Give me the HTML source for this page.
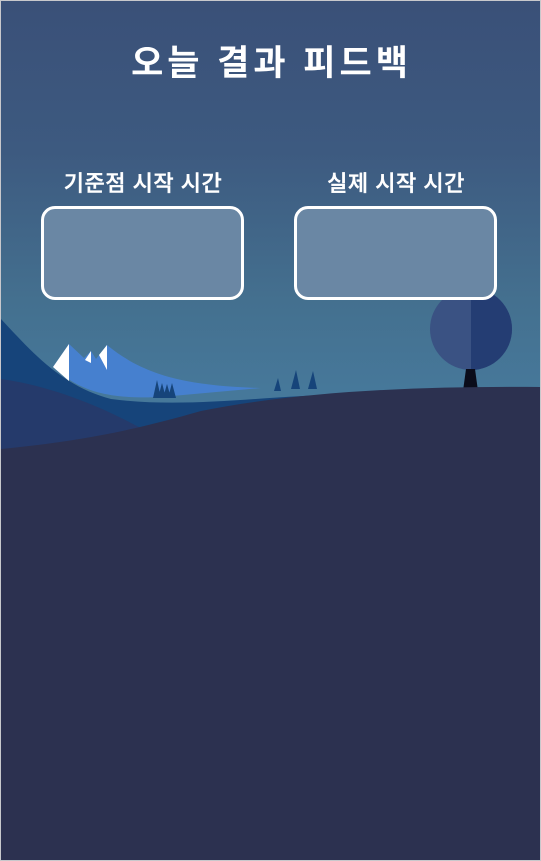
<!DOCTYPE html>
<html><head><meta charset="utf-8"><style>
html,body{margin:0;padding:0}
body{width:541px;height:861px;position:relative;overflow:hidden;font-family:"Liberation Sans","Noto Sans CJK KR",sans-serif;background:#2c3250}
.frame{position:absolute;left:0;top:0;width:539px;height:859px;border:1px solid #c8c8cc;overflow:hidden;background:linear-gradient(#3a5078 0px,#3d5a80 150px,#44708f 300px,#46789a 390px)}
h1{position:absolute;top:34px;left:0;width:541px;text-align:center;margin:0;color:#fff;font-size:35px;font-weight:bold;letter-spacing:4px}
.lbl{position:absolute;top:165px;color:#fff;font-size:22px;font-weight:500;text-align:center;width:240px;letter-spacing:0.5px;-webkit-text-stroke:0.4px #fff}
.box{position:absolute;top:205px;width:197px;height:88px;border:3px solid #fff;border-radius:14px;background:#6a87a4}
svg{position:absolute;left:0;top:0}
</style></head><body><div class="frame">
<svg width="541" height="861" viewBox="0 0 541 861">
<circle cx="470" cy="328" r="41" fill="#3a5283"/>
<path d="M470 287 A41 41 0 0 1 470 369 Z" fill="#243d73"/>
<path d="M465 368 L474 368 L477 390 L462 390 Z" fill="#0a0c1a"/>
<path d="M0 318 C30 350 60 385 110 398 C200 410 300 388 380 395 L541 420 L541 861 L0 861 Z" fill="#16447a"/>
<path d="M52 366 L68 343 L83 357 L90 350 L95 358 L106 344 C140 372 180 385 260 387 L160 396 C110 398 80 392 52 366 Z" fill="#4680cf"/>
<path d="M52 366 L68 343 L68 380 Z M84 359 L90 350 L90 362 Z M98 354 L106 344 L106 369 Z" fill="#fff"/>
<path d="M152 397 L156 379 L160 397 Z M157 397 L161 382 L165 397 Z M162 397 L166 383 L170 397 Z M167 397 L171 382 L175 397 Z M273 390 L277 377 L280 390 Z M290 388 L295 369 L299 388 Z M307 388 L312 370 L316 388 Z" fill="#16447a"/>
<path d="M0 378 C50 385 100 405 145 430 L0 450 Z" fill="#253a6b"/>
<path d="M0 448 C80 440 130 430 200 410 C300 390 420 385 541 386 L541 861 L0 861 Z" fill="#2c3150"/>
</svg>
<h1>오늘 결과 피드백</h1>
<div class="lbl" style="left:22px">기준점 시작 시간</div>
<div class="lbl" style="left:275px">실제 시작 시간</div>
<div class="box" style="left:40px"></div>
<div class="box" style="left:293px"></div>
</div></body></html>
